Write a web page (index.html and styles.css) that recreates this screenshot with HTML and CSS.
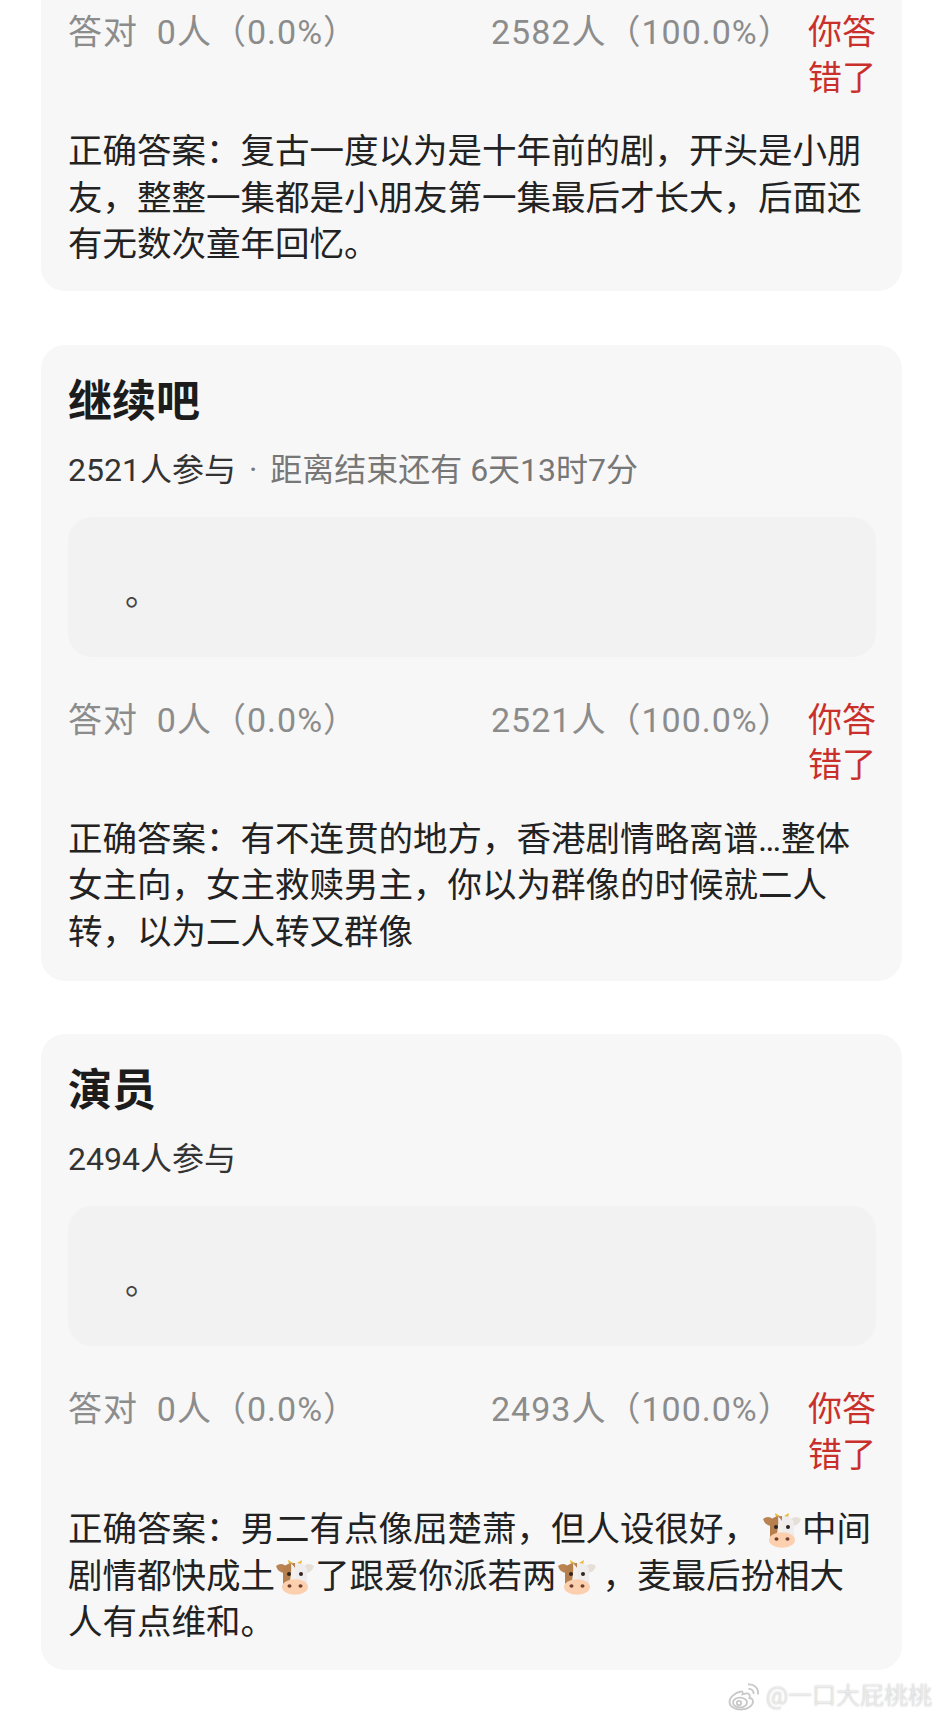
FILE: index.html
```html
<!DOCTYPE html>
<html lang="zh-CN">
<head>
    <meta charset="UTF-8">
    <title>投票结果</title>
    <link rel="stylesheet" href="styles.css">
</head>
<body>
    <svg class="defs" width="0" height="0">
        <symbol id="cow" viewBox="0 0 40 36">
            <path d="M14 6 L13 1 L18 4Z" fill="#e8b93c"/>
            <path d="M26 6 L27 1 L22 4Z" fill="#e8b93c"/>
            <path d="M11 7 Q6 3 1 7 Q3 14 10 14Z" fill="#b98452"/>
            <path d="M29 7 Q34 3 39 7 Q37 14 30 14Z" fill="#e6dfd8"/>
            <path d="M8 26 V12 Q8 4 20 4 V26Z" fill="#b5804e"/>
            <path d="M32 26 V12 Q32 4 20 4 V26Z" fill="#eeecec"/>
            <path d="M16 4.500 Q21 8 21 14 V26 H14 Q17 14 16 4.500Z" fill="#f3efec"/>
            <ellipse cx="20" cy="28" rx="13" ry="7.800" fill="#fccfae"/>
            <circle cx="14" cy="15" r="2" fill="#2d2320"/>
            <circle cx="26" cy="15" r="2" fill="#2d2320"/>
            <ellipse cx="14.500" cy="27" rx="2" ry="1.800" fill="#6b3f2a"/>
            <ellipse cx="25.500" cy="27" rx="2" ry="1.800" fill="#6b3f2a"/>
        </symbol>
    </svg>

    <div class="card card-first">
        <div class="stats">
            <span class="right-count">答对&nbsp;&nbsp;0人（0.0%）</span>
            <span class="wrong-count">2582人（100.0%）</span>
            <span class="verdict">你答错了</span>
        </div>
        <p class="answer">正确答案：复古一度以为是十年前的剧，开头是小朋友，整整一集都是小朋友第一集最后才长大，后面还有无数次童年回忆。</p>
    </div>

    <div class="card">
        <h2>继续吧</h2>
        <div class="meta">2521人参与<span class="muted">&nbsp;<span class="sep">·</span>&nbsp;距离结束还有 6天13时7分</span></div>
        <div class="choice">。</div>
        <div class="stats">
            <span class="right-count">答对&nbsp;&nbsp;0人（0.0%）</span>
            <span class="wrong-count">2521人（100.0%）</span>
            <span class="verdict">你答错了</span>
        </div>
        <p class="answer">正确答案：有不连贯的地方，香港剧情略离谱…整体女主向，女主救赎男主，你以为群像的时候就二人转，以为二人转又群像</p>
    </div>

    <div class="card">
        <h2>演员</h2>
        <div class="meta">2494人参与</div>
        <div class="choice">。</div>
        <div class="stats">
            <span class="right-count">答对&nbsp;&nbsp;0人（0.0%）</span>
            <span class="wrong-count">2493人（100.0%）</span>
            <span class="verdict">你答错了</span>
        </div>
        <p class="answer answer-emoji">正确答案：男二有点像屈楚萧，但人设很好，<svg class="emoji emoji-after-comma"><use href="#cow"/></svg>中间剧情都快成土<svg class="emoji"><use href="#cow"/></svg>了跟爱你派若两<svg class="emoji emoji-loose"><use href="#cow"/></svg>，麦最后扮相大人有点维和。</p>
    </div>

    <div class="watermark">
        <svg class="weibo" viewBox="0 0 32 28" fill="none" stroke="#c8c8c8" stroke-width="1.800">
            <path d="M13 9 C7 10 1.500 15 1.500 19.500 C1.500 24 7 27 13 27 C20 27 25 23 25 19 C25 16.500 22.500 15.500 21.500 15.500 C22.500 12.500 21 10.500 18 11 L14.500 12 C15 9.500 14.500 8.800 13 9Z"/>
            <ellipse cx="12" cy="20" rx="7" ry="4.800"/>
            <circle cx="11" cy="20.500" r="2.200"/>
            <path d="M20 2 C26 1 31 6 30 12"/>
            <path d="M20.500 6.500 C23.500 6 26 8.500 25.500 11.500"/>
        </svg>
        <span>@一口大屁桃桃</span>
    </div>
</body>
</html>
```

FILE: styles.css
```css
html, body {
    height: 1717px;
    overflow: hidden;
}
body {
    position: relative;
    margin: 0;
    background: #fff;
    color: #222;
    font-family: Roboto, "Noto Sans CJK SC", sans-serif;
}
.defs {
    position: absolute;
}
.card {
    margin: 0 38px 53px 41px;
    padding: 28px 26px 26px 27px;
    background: #f7f7f7;
    border-radius: 24px;
}
.card-first {
    margin-bottom: 54px;
    padding-top: 10px;
    padding-bottom: 23px;
    border-radius: 0 0 24px 24px;
}
h2 {
    margin: 0;
    font-size: 44px;
    line-height: 58px;
    font-weight: 700;
    color: #1c1c1c;
}
.meta {
    margin-top: 17px;
    font-size: 32px;
    line-height: 44px;
    color: #333;
}
.muted {
    color: #777;
}
.sep {
    margin: 0 5px;
}
.choice {
    margin: 25px 0 41px;
    height: 133px;
    padding: 7px 0 0 57px;
    background: #f2f2f2;
    border-radius: 24px;
    font-size: 34px;
    line-height: 138px;
    color: #444;
}
.stats {
    display: flex;
    font-size: 34px;
    line-height: 45.500px;
    color: #8c8c8c;
}
.right-count {
    width: 423px;
    flex: none;
    letter-spacing: 1px;
}
.wrong-count {
    flex: 1;
    letter-spacing: 1px;
}
.verdict {
    width: 68px;
    flex: none;
    color: #c9302c;
}
.answer {
    margin: 27px 0 0;
    font-size: 34.500px;
    line-height: 46.500px;
}
.answer-emoji {
    margin: 28px 0 -2px;
}
.emoji {
    width: 40px;
    height: 36px;
    vertical-align: -7px;
}
.emoji-after-comma {
    margin-left: 4px;
}
.emoji-loose {
    margin-right: 6px;
}
.watermark {
    position: absolute;
    right: 8px;
    bottom: 4px;
    display: flex;
    align-items: center;
    gap: 6px;
    font-size: 24px;
    font-weight: 300;
    line-height: 34px;
    color: #ececec;
    text-shadow: 0 0 2px #b0b0b0;
}
.weibo {
    width: 32px;
    height: 29px;
}
```
